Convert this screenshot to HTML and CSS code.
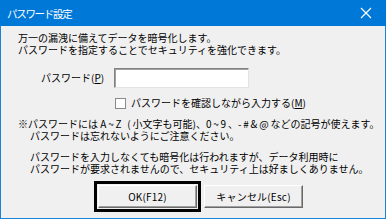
FILE: index.html
```html
<!DOCTYPE html>
<html lang="ja">
<head>
<meta charset="utf-8">
<link rel="stylesheet" href="styles.css">
</head>
<body>
<div class="window">
  <div class="titlebar">
    <span class="title">パスワード設定</span>
    <svg class="close" width="12" height="12" viewBox="0 0 12 12"><path d="M1 1L11 11M11 1L1 11" stroke="#fff" stroke-width="1.2"/></svg>
  </div>
  <div class="content">
    <p class="para intro">万一の漏洩に備えてデータを暗号化します。<br>パスワードを指定することでセキュリティを強化できます。</p>
    <div class="pwrow">
      <span class="pwlabel">パスワード(<u>P</u>)</span>
      <span class="input"></span>
    </div>
    <div class="chkrow">
      <span class="checkbox"></span>
      <span>パスワードを確認しながら入力する(<u>M</u>)</span>
    </div>
    <p class="para note">※パスワードには <span class="lat">A~Z (</span>小文字も可能)、<span class="lat">0~9</span>、<span class="lat">-#&amp;@</span>などの記号が使えます。<br><span class="indent">パスワードは忘れないようにご注意ください。</span></p>
    <p class="para warn">パスワードを入力しなくても暗号化は行われますが、データ利用時に<br>パスワードが要求されませんので、セキュリティ上は好ましくありません。</p>
    <div class="buttons">
      <div class="focus"><div class="btn ok">OK(F12)</div></div>
      <div class="btn cancel">キャンセル(Esc)</div>
    </div>
  </div>
</div>
</body>
</html>
```
FILE: styles.css
```css
html, body {
  margin: 0;
  padding: 0;
  background: #ffffff;
}
.window {
  width: 386px;
  height: 219px;
  box-sizing: border-box;
  border: 1px solid #1883d7;
  border-top: none;
  background: #f0f0f0;
  display: flex;
  flex-direction: column;
}
.titlebar {
  height: 26px;
  background: #0078d7;
  margin: 0 -1px;
  display: flex;
  align-items: center;
  justify-content: space-between;
  padding: 0 14px 0 7px;
  color: #fff;
  font: 10.5px "Noto Sans CJK JP", sans-serif;
  letter-spacing: -1.3px;
}
.title { margin-top: 1px; }
.close { display: block; }
.content {
  font: 10px "Noto Sans CJK JP", sans-serif;
  letter-spacing: 0;
  color: #000;
  line-height: 12px;
  padding: 6px 0 0 17px;
}
.para { margin: 0; }
.lat { letter-spacing: 1.8px; }
.pwrow {
  display: flex;
  align-items: center;
  margin-top: 12px;
  padding-left: 23px;
}
.pwlabel { width: 73px; }
.input {
  width: 135px;
  height: 20px;
  box-sizing: border-box;
  background: #fff;
  border: 1px solid;
  border-color: #828282 #e3e3e3 #e3e3e3 #828282;
  box-shadow: inset 1px 1px 0 #a0a0a0;
}
.chkrow {
  display: flex;
  align-items: center;
  gap: 5px;
  margin-top: 9px;
  padding-left: 97px;
}
.checkbox {
  width: 11px;
  height: 11px;
  box-sizing: border-box;
  background: #fff;
  border: 1px solid #8a8a8a;
}
.note { margin-top: 9px; }
.indent { padding-left: 12px; }
.warn { margin-top: 9px; padding-left: 12px; }
.buttons {
  display: flex;
  align-items: center;
  gap: 3px;
  margin-top: 6px;
  padding-left: 76px;
}
.focus {
  border: 3px solid #000;
  padding: 1px;
}
.btn {
  width: 99px;
  height: 23px;
  box-sizing: border-box;
  display: flex;
  align-items: center;
  justify-content: center;
  background: #f0f0f0;
  border: 1px solid;
  border-color: #fff #696969 #696969 #fff;
  box-shadow: inset -1px -1px 0 #a0a0a0;
  letter-spacing: 0.2px;
}
```
